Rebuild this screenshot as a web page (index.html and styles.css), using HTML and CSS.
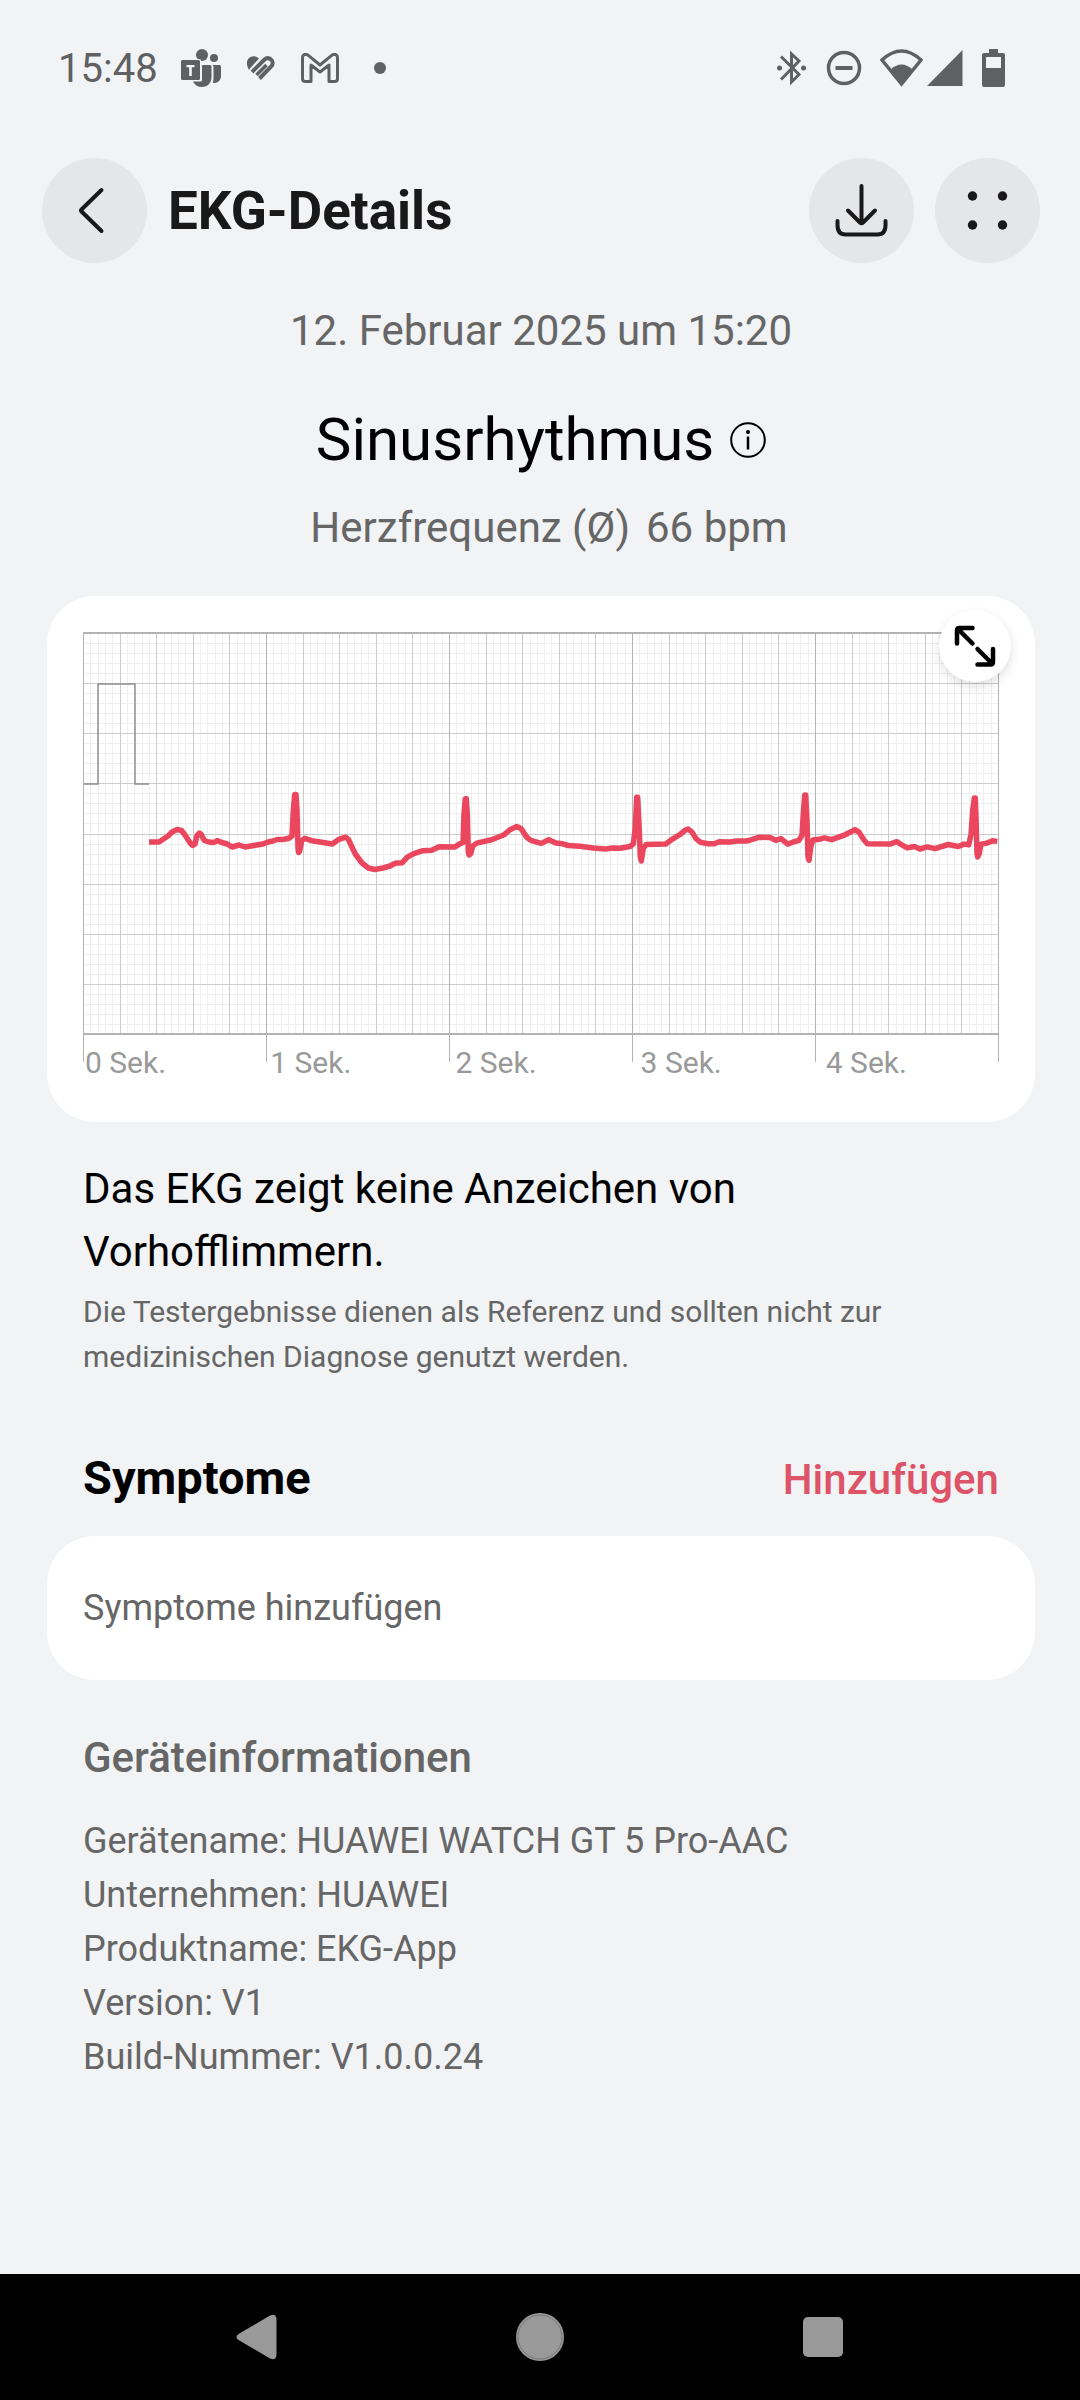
FILE: index.html
```html
<!DOCTYPE html>
<html lang="de">
<head>
    <meta charset="UTF-8">
    <meta name="viewport" content="width=device-width, initial-scale=1">
    <title>EKG-Details</title>
    <link rel="stylesheet" href="styles.css">
</head>
<body>

    <div class="status-bar">
        <span class="time">15:48</span>
        <div class="status-left">
            <svg width="40" height="38" viewBox="0 0 40 38" fill="currentColor">
                <circle cx="21" cy="6" r="6"/>
                <circle cx="33" cy="9" r="4"/>
                <path d="M31.500 16h7q1.500 0 1.500 1.500V27c0 4-3 7-6.500 7-1 0-1.500-.2-2-.4 1-1.500 1-3 1-5V17.500z"/>
                <path d="M21 16h8q1.500 0 1.500 1.500V28c0 6-4 10-9.500 10-4.500 0-7.500-2-9-5.500h7.500q1.500 0 1.500-1.500z"/>
                <rect x="-1" y="10" width="21" height="22" rx="2" fill="#f1f3f5"/>
                <path fill-rule="evenodd" d="M1.500 11h16q1.500 0 1.500 1.500v17q0 1.500-1.500 1.500h-16Q0 31 0 29.500v-17Q0 11 1.500 11zM5.500 16v2.200h2.700V27h2.600v-8.800h2.700V16z"/>
            </svg>
            <svg width="28" height="24" viewBox="0 0 28 24" fill="none" stroke="currentColor" stroke-width="4">
                <path d="M2 14C-1.500 8-.5 3 3.500 1c3-1.400 5.500-.8 8.500 1.500L3 12.500z" fill="currentColor" stroke="none"/>
                <path d="M5 16L17 4c2.500-2.300 5-2.300 7-.6 2.300 2 2.300 5 0 7.300L12.500 22.500"/>
                <path d="M9.500 19L19.500 9" stroke-width="3.500"/>
            </svg>
            <svg width="38" height="30" viewBox="0 0 38 30" fill="none" stroke="currentColor" stroke-width="3" stroke-linejoin="round">
                <path d="M1.500 5v20.500q0 3 3 3H10V12l9 7 9-7v16.500h5.500q3 0 3-3V5c0-3.500-3-4.500-5.500-2.800L19 12 7 2.200C4.500.500 1.500 1.500 1.500 5z"/>
            </svg>
            <svg width="12" height="12" viewBox="0 0 12 12"><circle cx="6" cy="6" r="6" fill="currentColor"/></svg>
        </div>
        <div class="status-right">
            <svg class="bluetooth" width="29" height="36" viewBox="0 0 29 36" fill="none" stroke="currentColor" stroke-width="3">
                <path d="M4 6.500l18 18-7.500 7.500V4L22 11 4 29.500"/>
                <circle cx="2.500" cy="18" r="2.500" fill="currentColor" stroke="none"/>
                <circle cx="26.500" cy="18" r="2.500" fill="currentColor" stroke="none"/>
            </svg>
            <svg class="dnd" width="36" height="36" viewBox="0 0 36 36" fill="none" stroke="currentColor">
                <circle cx="18" cy="18" r="15.500" stroke-width="3.500"/>
                <path d="M9.500 18h17" stroke-width="4"/>
            </svg>
            <svg class="wifi" width="43" height="38" viewBox="0 0 43 38">
                <path d="M2 11Q21.500-7 41 11L21.500 35z" fill="none" stroke="currentColor" stroke-width="3.500"/>
                <path d="M11 20q10.500-9 21 0L21.500 36z" fill="currentColor"/>
            </svg>
            <svg class="signal" width="36" height="38" viewBox="0 0 36 38"><path d="M35.500 1v36H0z" fill="currentColor"/></svg>
            <svg class="battery" width="23" height="38" viewBox="0 0 23 38">
                <path fill="currentColor" fill-rule="evenodd" d="M7 0h9v4h5q2 0 2 2v30q0 2-2 2H2q-2 0-2-2V6q0-2 2-2h5zM4 8v11h15V8z"/>
            </svg>
        </div>
    </div>

    <header class="app-bar">
        <button class="round-btn" aria-label="Zurück">
            <svg width="53" height="53" viewBox="0 0 53 53" fill="none" stroke="currentColor" stroke-width="4" stroke-linecap="round" stroke-linejoin="round">
                <path d="M33.500 6L13.500 25.500Q12.500 26.500 13.500 27.500L33.500 47"/>
            </svg>
        </button>
        <h1 class="app-title">EKG-Details</h1>
        <button class="round-btn" aria-label="Herunterladen">
            <svg width="53" height="53" viewBox="0 0 53 53" fill="none" stroke="currentColor" stroke-width="4" stroke-linecap="round" stroke-linejoin="round">
                <path d="M26.500 2v37M13 26.500l12 12q1.500 1.500 3 0l12-12"/>
                <path d="M2.500 37v4q0 9.500 8 9.500h32q8 0 8-9.500v-4"/>
            </svg>
        </button>
        <button class="round-btn" aria-label="Mehr">
            <svg width="53" height="53" viewBox="0 0 53 53" fill="currentColor">
                <circle cx="11.500" cy="12" r="4.700"/>
                <circle cx="41.500" cy="12" r="4.700"/>
                <circle cx="11.500" cy="41" r="4.700"/>
                <circle cx="41.500" cy="41" r="4.700"/>
            </svg>
        </button>
    </header>

    <main class="content">
        <p class="date">12. Februar 2025 um 15:20</p>
        <div class="result">
            <h2>Sinusrhythmus</h2>
            <button class="info-btn" aria-label="Info">
                <svg width="36" height="36" viewBox="0 0 36 36" fill="none" stroke="currentColor" stroke-width="2">
                    <circle cx="18" cy="18" r="16.800"/>
                    <path d="M18 14.500v13" stroke-width="2.500"/>
                    <circle cx="18" cy="10" r="2" fill="currentColor" stroke="none"/>
                </svg>
            </button>
        </div>
        <p class="heart-rate"><span>Herzfrequenz (Ø)</span><span>66 bpm</span></p>

        <section class="card chart-card">
            <svg class="chart" viewBox="0 0 916 431" fill="none">
                <path id="gridMinor" class="grid-minor"/>
                <path id="gridMid" class="grid-mid"/>
                <path id="gridSecond" class="grid-second"/>
                <path class="grid-frame" d="M0 1H916M0 402H916"/>
                <path class="pulse" d="M1 152H15V52H52V152H66"/>
                <polyline class="ecg" points="66,210 76,210 85,204 89,200 94,197.500 98.500,198.500 102,203 107.500,211.500 109.700,213.500 112,212 114,203.500 116.300,201 118.300,202.500 121.300,208.500 125.700,210 131,210.500 134.300,208.500 138.700,210.500 144.300,212 149,215 156,213 162,215 173.500,213 180,212 185,210 190,209 194,207.500 200,207.500 206,206.300 209,204 210.300,178 211.700,162.500 213,162.500 214,178 215,216 215.700,220.500 216.700,219 218.700,208.700 221.700,206.300 228.700,208.700 237,210 249.300,212 255.300,207.700 262.700,205.200 265.300,207.300 272.300,222 279,231 285.300,236 291.700,237.500 300,236 307,234 312,231.300 319.300,230.700 324.300,225.200 330.300,221.800 339.700,218.700 348.700,218.300 356.300,214.700 372,214.900 376.300,212.100 380,210.500 381,182 382.300,166.700 383.300,166.700 384.300,182 385.300,219.700 386,223 387.700,221.800 389.700,214.200 393.700,211.100 408.700,207.700 421,202.800 427,197.700 433.700,194.600 438,196.600 444.300,205.900 448.700,208.700 458.300,211.400 465.700,207.700 473,211.100 479.700,211.800 485.300,213.500 497,214.200 510.300,215.900 522,217 530.300,215.900 537,216.300 547,214.500 550.300,211.800 552.300,195.600 553.700,165.300 554.700,165.300 556,192 557.300,225 558.300,229 560.300,216.300 563,212.500 582.700,212.100 590.300,206.600 597,202.500 602,198.400 605.300,197 609,200.100 613,206.600 617.700,210.400 625.300,211.800 631.300,211.800 636.300,209.700 647,210 653.700,209 663.700,209 668.700,207.700 676.300,205.200 687,205.600 692.700,208.300 698,206.600 704.700,212.100 710.300,210 716,208.300 719,203.200 720.300,182 721.700,163 722.700,163 724,188.700 725,225 726,228.300 728,213.500 730,208 736,207.300 741.300,205.900 748.700,207.700 762,202.800 772,197.700 776,200.100 781,208 784.300,211.800 807,212.100 813.700,209.700 818.700,212.800 824.300,215.900 831.300,214.500 837,217 844.300,214.900 852,216.600 865.300,212.500 875.300,214.500 881,212.100 885.700,212.800 888,202.500 889.700,178.400 891.300,166 892.300,166 893,185.300 894,221.400 894.700,224.900 896.300,221.400 898,212.100 903.700,211.100 909.700,208.700 914.300,209.400"/>
            </svg>
            <div class="time-axis">
                <span>0 Sek.</span>
                <span>1 Sek.</span>
                <span>2 Sek.</span>
                <span>3 Sek.</span>
                <span>4 Sek.</span>
            </div>
            <button class="expand-btn" aria-label="Vergrößern">
                <svg width="42" height="42" viewBox="0 0 42 42" fill="none" stroke="currentColor" stroke-width="4.500" stroke-linecap="round" stroke-linejoin="round">
                    <path d="M18.500 3H5.500Q3 3 3 5.500V18.500M4 4L18.500 18.500"/>
                    <path d="M23.500 39.500H36.500Q39 39.500 39 37V24M38 38.500L23.500 24"/>
                </svg>
            </button>
        </section>

        <section class="text-block">
            <p class="conclusion">Das EKG zeigt keine Anzeichen von Vorhofflimmern.</p>
            <p class="note">Die Testergebnisse dienen als Referenz und sollten nicht zur medizinischen Diagnose genutzt werden.</p>
        </section>

        <div class="section-head">
            <h2>Symptome</h2>
            <button class="add-btn">Hinzufügen</button>
        </div>
        <section class="card symptom-card">Symptome hinzufügen</section>

        <section class="device">
            <h3>Geräteinformationen</h3>
            <ul>
                <li>Gerätename: HUAWEI WATCH GT 5 Pro-AAC</li>
                <li>Unternehmen: HUAWEI</li>
                <li>Produktname: EKG-App</li>
                <li>Version: V1</li>
                <li>Build-Nummer: V1.0.0.24</li>
            </ul>
        </section>
    </main>

    <nav class="nav-bar">
        <button aria-label="Zurück">
            <svg width="48" height="48" viewBox="0 0 48 48" fill="currentColor"><path d="M5.500 21L37 2.500Q43 0 43.500 6V42Q43 48 37 45.500L5.500 27Q1.500 24 5.500 21z"/></svg>
        </button>
        <button aria-label="Startseite">
            <svg width="48" height="48" viewBox="0 0 48 48"><circle cx="24" cy="24" r="24" fill="currentColor"/><circle cx="24" cy="24" r="22" fill="none" stroke="#777"/></svg>
        </button>
        <button aria-label="Letzte Apps">
            <svg width="48" height="48" viewBox="0 0 48 48"><rect x="4" y="4" width="40" height="40" rx="5" fill="currentColor"/></svg>
        </button>
    </nav>

    <script>
        // 5 seconds wide, 25 cells across, 8 cells down, 5 fine steps per cell
        var minor = '', mid = '', second = '';
        for (var i = 0; i <= 125; i++) {
            var x = Math.round(i * 7.32) + 0.5;
            if (i % 25 === 0) {
                second += 'M' + Math.min(x, 915.5) + ' 0V430';
            } else if (i % 5 === 0) {
                mid += 'M' + x + ' 0V402';
            } else {
                minor += 'M' + x + ' 0V402';
            }
        }
        for (var j = 1; j < 40; j++) {
            var y = Math.round(j * 10.025) + 0.5;
            if (j % 5 === 0) {
                mid += 'M0 ' + (y + 1) + 'H916';
            } else {
                minor += 'M0 ' + (y + 1) + 'H916';
            }
        }
        document.getElementById('gridMinor').setAttribute('d', minor);
        document.getElementById('gridMid').setAttribute('d', mid);
        document.getElementById('gridSecond').setAttribute('d', second);
    </script>

</body>
</html>
```
FILE: styles.css
```css
* {
    box-sizing: border-box;
}

body {
    margin: 0;
    min-height: 100vh;
    display: flex;
    flex-direction: column;
    font-family: Roboto, sans-serif;
    background-color: #f1f3f5;
    color: #000;
}

h1, h2, h3, p, ul {
    margin: 0;
    padding: 0;
}

button {
    padding: 0;
    border: none;
    background: none;
    font-family: inherit;
    color: inherit;
    cursor: pointer;
}

svg {
    display: block;
}

/* status bar */
.status-bar {
    height: 136px;
    padding: 0 75px 0 58px;
    display: flex;
    align-items: center;
    color: #5f6062;
}

.time {
    font-size: 40px;
}

.status-left {
    display: flex;
    align-items: center;
    gap: 26px;
    margin-left: 23px;
}

.status-left svg:last-child {
    margin-left: 9px;
}

.status-right {
    display: flex;
    align-items: center;
    margin-left: auto;
}

.dnd {
    margin: 0 18px 0 20px;
}

.signal {
    margin: 0 19px 0 4px;
}

/* header */
.app-bar {
    display: flex;
    align-items: center;
    gap: 21px;
    padding: 22px 40px 0 42px;
    color: #191919;
}

.app-title {
    flex: 1;
    font-size: 53px;
    font-weight: 700;
    line-height: 58px;
}

.round-btn {
    width: 105px;
    height: 105px;
    display: flex;
    align-items: center;
    justify-content: center;
    border-radius: 50%;
    background-color: #e5e6e8;
}

.content {
    flex: 1;
    padding: 38px 45px 60px 47px;
}

.date, .heart-rate {
    font-size: 42px;
    line-height: 60px;
    text-align: center;
    color: #666;
}

.result {
    display: flex;
    align-items: center;
    justify-content: center;
    gap: 16px;
    margin: 39px 0 18px;
}

.result h2 {
    font-size: 60px;
    font-weight: 400;
    line-height: 80px;
}

.heart-rate {
    display: flex;
    justify-content: center;
    gap: 16px;
    margin-bottom: 38px;
    padding-left: 16px;
}

/* cards */
.card {
    border-radius: 48px;
    background-color: #fff;
}

.chart-card {
    position: relative;
    padding: 36px 36px 41px;
}

.chart {
    width: 100%;
}

.grid-minor, .grid-mid, .grid-second, .grid-frame {
    shape-rendering: crispEdges;
}

.grid-minor {
    stroke: #efefef;
}

.grid-mid {
    stroke: #cccccc;
}

.grid-second {
    stroke: #b3b3b3;
}

.grid-frame {
    stroke: #b3b3b3;
    stroke-width: 2;
}

.pulse {
    stroke: #8f8f8f;
    stroke-width: 1.500;
}

.ecg {
    stroke: #ea475f;
    stroke-width: 5.500;
    stroke-linejoin: round;
}

.time-axis {
    display: flex;
    justify-content: space-between;
    margin-top: -18px;
    padding: 0 92px 0 2px;
    font-size: 30px;
    line-height: 36px;
    color: #999;
}

.expand-btn {
    position: absolute;
    top: 14px;
    right: 24px;
    width: 72px;
    height: 72px;
    display: flex;
    align-items: center;
    justify-content: center;
    border-radius: 50%;
    background-color: #fff;
    box-shadow: 0 5px 12px rgba(0, 0, 0, 0.12);
}

/* text */
.text-block {
    padding: 35px 36px 0;
}

.conclusion {
    max-width: 800px;
    margin-bottom: 6px;
    font-size: 42px;
    line-height: 63px;
}

.note {
    font-size: 30px;
    line-height: 45px;
    color: #666;
}

.section-head {
    display: flex;
    justify-content: space-between;
    align-items: baseline;
    padding: 69px 36px 26px;
}

.section-head h2 {
    font-size: 47px;
    font-weight: 700;
    line-height: 60px;
}

.add-btn {
    font-size: 42px;
    font-weight: 500;
    line-height: 60px;
    color: #dd5368;
}

.symptom-card {
    padding: 45px 36px;
    font-size: 36px;
    line-height: 54px;
    color: #666;
}

.device {
    padding: 48px 36px 0;
    color: #666;
}

.device h3 {
    margin-bottom: 26px;
    font-size: 42px;
    font-weight: 500;
    line-height: 60px;
}

.device ul {
    list-style: none;
    font-size: 36px;
    line-height: 54px;
}

/* system navigation */
.nav-bar {
    height: 126px;
    display: flex;
    align-items: center;
    justify-content: center;
    gap: 235px;
    background-color: #000;
    color: #999;
}
```
